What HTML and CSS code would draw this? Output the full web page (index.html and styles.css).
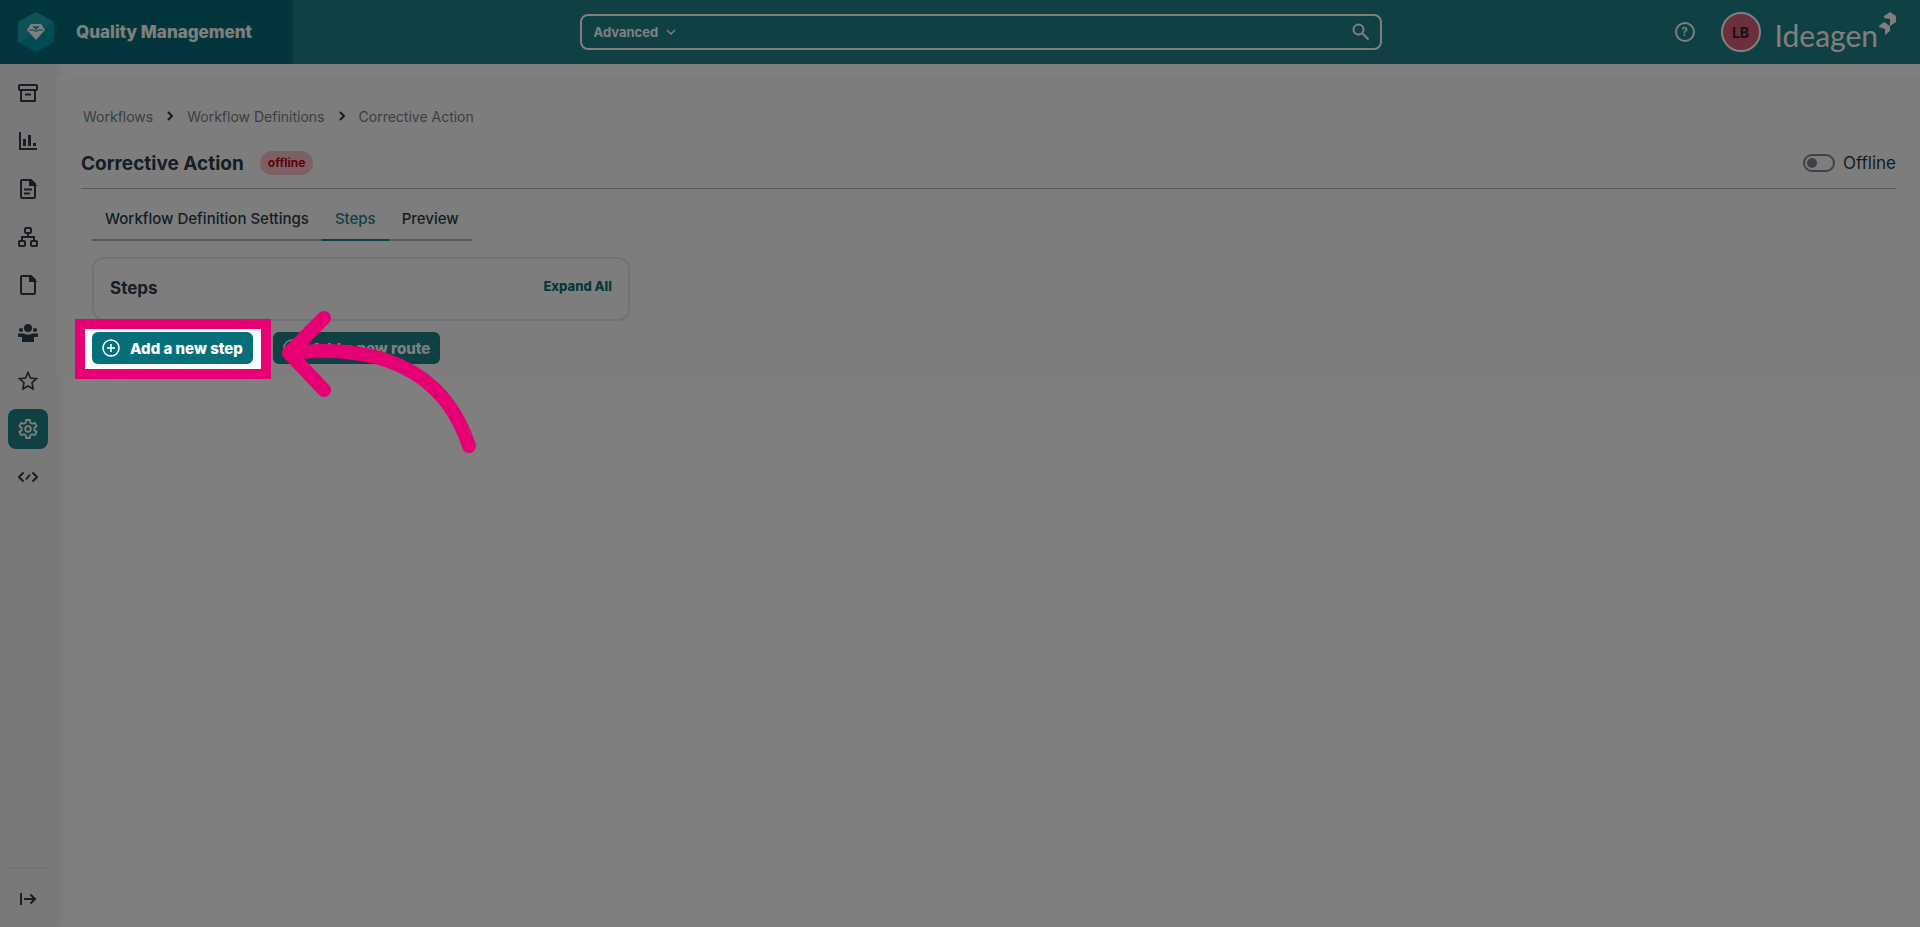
FILE: index.html
```html
<!DOCTYPE html>
<html lang="en">
<head>
    <meta charset="UTF-8">
    <title>Quality Management</title>
    <link rel="stylesheet" href="styles.css">
</head>
<body>
    <header class="topbar">
        <a class="brand" href="#">
            <svg class="brand-icon" viewBox="0 0 36 40">
                <path d="M18 0 36 10v20L18 40 0 30V10z" fill="#0096a8"/>
                <path d="M18 0 36 10 0 31V10z" fill="#3bb0bd" opacity=".5"/>
                <path d="M13 12h10l4 6-9 10-9-10z" fill="#fff"/>
                <path d="M11 18h4l2 1h2l2-1h4M15 14l3 3 3-3M18 14v3" fill="none" stroke="#0096a8" stroke-width="1.2"/>
            </svg>
            <span>Quality Management</span>
        </a>
        <form class="search">
            <select class="search-mode" aria-label="Search mode">
                <option>Advanced</option>
            </select>
            <svg class="chevron" viewBox="0 0 10 6"><path d="M1 1l4 4 4-4"/></svg>
            <input class="search-input" type="text" aria-label="Search">
            <button class="search-button" type="submit" aria-label="Search">
                <svg viewBox="0 0 18 18"><circle cx="6.5" cy="6.5" r="5"/><path d="M10.5 10.5l6 6"/></svg>
            </button>
        </form>
        <div class="actions">
            <button class="help" type="button" aria-label="Help">?</button>
            <button class="avatar" type="button">LB</button>
            <a class="company" href="#">
                <span>Ideagen</span>
                <svg viewBox="0 0 18 24">
                    <path d="M12 0l6 4v6l-6 4V7L6 6V4z"/>
                    <path d="M6 10l6 4v5l-5 4v-6l-6-2v-1z"/>
                </svg>
            </a>
        </div>
    </header>

    <div class="page">
        <nav class="sidebar">
            <a class="nav-item" href="#" aria-label="Archive">
                <svg viewBox="0 0 20 20"><rect x="1" y="2" width="18" height="5" rx="1"/><path d="M3 7v10.500q0 .5.500.500h13q.5 0 .5-.5V7M7 11.500h6"/></svg>
            </a>
            <a class="nav-item" href="#" aria-label="Reports">
                <svg viewBox="0 0 20 20"><path d="M2 1v17h17"/><path d="M6.500 8v7M11.500 4v11M16.500 12v3" stroke-width="3"/></svg>
            </a>
            <a class="nav-item" href="#" aria-label="Documents">
                <svg viewBox="0 0 20 20"><path d="M4 1h9l4 4v13q0 1-1 1H4q-1 0-1-1V2q0-1 1-1zM6 10.500h8M6 14.500h6"/><path d="M12 1v5h5z" fill="currentColor"/></svg>
            </a>
            <a class="nav-item" href="#" aria-label="Structure">
                <svg viewBox="0 0 20 20"><rect x="7" y="1" width="6" height="5" rx="1"/><rect x="1" y="14" width="6" height="5" rx="1"/><rect x="13" y="14" width="6" height="5" rx="1"/><path d="M10 6v4M4 14v-4h12v4"/></svg>
            </a>
            <a class="nav-item" href="#" aria-label="Files">
                <svg viewBox="0 0 20 20"><path d="M4 1h9l4 4v13q0 1-1 1H4q-1 0-1-1V2q0-1 1-1z"/><path d="M12 1v5h5z" fill="currentColor"/></svg>
            </a>
            <a class="nav-item" href="#" aria-label="People">
                <svg viewBox="0 0 20 20"><g fill="currentColor" stroke="none"><circle cx="10" cy="5" r="4"/><circle cx="3" cy="7" r="2"/><circle cx="17" cy="7" r="2"/><path d="M0 10.500h6l1.500 1h5l1.500-1h6V14h-4v5H4v-5H0z"/></g></svg>
            </a>
            <a class="nav-item" href="#" aria-label="Favourites">
                <svg viewBox="0 0 20 20"><path d="M10 1.500l2.500 5.500 6 .7-4.500 4 1.200 6.300L10 15l-5.200 3L6 11.700l-4.500-4 6-.7z" stroke-width="1.600"/></svg>
            </a>
            <a class="nav-item active" href="#" aria-label="Settings">
                <svg viewBox="0 0 20 20"><path d="M8.200 1h3.600l.5 2.700 1.900 1.100 2.600-1 1.800 3.200-2.100 1.700v2.600l2.100 1.700-1.800 3.200-2.600-1-1.900 1.100-.5 2.700H8.200l-.5-2.700-1.900-1.100-2.600 1L1.400 13l2.100-1.700V8.700L1.400 7l1.800-3.200 2.600 1 1.900-1.100z" stroke-width="1.800"/><circle cx="10" cy="10" r="2.800" stroke-width="1.800"/></svg>
            </a>
            <a class="nav-item" href="#" aria-label="Developer">
                <svg viewBox="0 0 20 20"><path d="M5.500 5.500L1 10l4.500 4.500M14.500 5.500L19 10l-4.500 4.500M8 12.500l4-5"/></svg>
            </a>
            <div class="sidebar-bottom">
                <button class="nav-item" type="button" aria-label="Expand menu">
                    <svg viewBox="0 0 20 20"><path d="M3 4v12M6 10h11M12.500 5.500L17 10l-4.500 4.500"/></svg>
                </button>
            </div>
        </nav>

        <main class="content">
            <div class="panel">
                <nav class="breadcrumbs">
                    <a href="#">Workflows</a>
                    <svg viewBox="0 0 6 10"><path d="M1 1l4 4-4 4"/></svg>
                    <a href="#">Workflow Definitions</a>
                    <svg viewBox="0 0 6 10"><path d="M1 1l4 4-4 4"/></svg>
                    <a href="#">Corrective Action</a>
                </nav>

                <div class="title-row">
                    <h1>Corrective Action</h1>
                    <span class="badge">offline</span>
                    <label class="toggle" for="online">
                        <input type="checkbox" id="online">
                        Offline
                    </label>
                </div>

                <div class="workflow">
                    <nav class="tabs">
                        <a class="tab" href="#">Workflow Definition Settings</a>
                        <a class="tab selected" href="#">Steps</a>
                        <a class="tab" href="#">Preview</a>
                    </nav>

                    <section class="card">
                        <h2>Steps</h2>
                        <button class="link-button" type="button">Expand All</button>
                    </section>

                    <div class="buttons">
                        <div class="spotlight">
                            <button class="btn btn-step" type="button">
                                <svg viewBox="0 0 18 18"><circle cx="9" cy="9" r="8"/><path d="M9 5v8M5 9h8"/></svg>
                                Add a new step
                            </button>
                            <svg class="arrow" viewBox="0 0 210 150">
                                <path d="M47 10L12 45l35 37M12 45C96 36 166 58 192 138"/>
                            </svg>
                        </div>
                        <button class="btn" type="button">
                            <svg viewBox="0 0 18 18"><circle cx="9" cy="9" r="8"/><path d="M9 5v8M5 9h8"/></svg>
                            Add a new route
                        </button>
                    </div>
                </div>
            </div>
        </main>
    </div>
</body>
</html>
```
FILE: styles.css
```css
* {
    box-sizing: border-box;
}

body {
    margin: 0;
    min-height: 100vh;
    display: flex;
    flex-direction: column;
    font-family: Inter, "Liberation Sans", sans-serif;
    font-size: 14px;
    color: #2b3a4a;
    background-color: #fff;
}

a {
    color: inherit;
    text-decoration: none;
}

button, input, select {
    font-family: inherit;
    color: inherit;
    border: none;
    background: none;
    padding: 0;
}

button {
    cursor: pointer;
}

svg {
    flex: none;
    fill: none;
    stroke: currentColor;
    stroke-width: 2;
}

/* Top bar */
.topbar {
    display: flex;
    align-items: center;
    justify-content: space-between;
    height: 64px;
    background-color: #1e8088;
    color: #fff;
}

.brand {
    display: flex;
    align-items: center;
    gap: 22px;
    width: 293px;
    height: 100%;
    padding-left: 18px;
    background-color: #066c78;
    font-size: 17px;
    font-weight: 800;
}

.brand-icon {
    width: 36px;
    height: 40px;
    stroke: none;
}

.search {
    display: flex;
    align-items: center;
    width: calc(42% - 4px);
    height: 36px;
    padding: 0 10px 0 12px;
    border: 2px solid #fff;
    border-radius: 8px;
}

.search-mode {
    appearance: none;
    font-size: 13px;
    font-weight: 700;
    outline: none;
}

.chevron {
    width: 10px;
    height: 6px;
    margin-left: 7px;
    stroke-width: 1.5;
}

.search-input {
    flex: 1;
    height: 100%;
    padding: 0 12px;
    outline: none;
}

.search-button svg {
    display: block;
    width: 18px;
    height: 18px;
}

.actions {
    display: flex;
    align-items: center;
    padding: 0 24px 0 6px;
}

.help {
    width: 20px;
    height: 20px;
    margin-right: 26px;
    border: 2px solid #fff;
    border-radius: 50%;
    font-size: 12px;
    font-weight: 600;
    line-height: 16px;
}

.avatar {
    width: 40px;
    height: 40px;
    margin-right: 14px;
    border: 2px solid #fff;
    border-radius: 50%;
    background-color: #d95f78;
    color: #2a2138;
    font-size: 14px;
    font-weight: 700;
}

.company {
    display: flex;
    align-items: flex-start;
    padding-top: 5px;
    font-family: Lato, sans-serif;
    font-size: 30px;
    line-height: 46px;
}

.company svg {
    width: 18px;
    height: 24px;
    fill: #fff;
    stroke: none;
}

/* Side menu */
.page {
    flex: 1;
    display: flex;
}

.sidebar {
    display: flex;
    flex-direction: column;
    align-items: center;
    gap: 8px;
    width: 56px;
    padding: 9px 8px 8px;
    background-color: #f3f3f3;
    box-shadow: 2px 0 12px rgba(0, 0, 0, 0.1);
}

.nav-item {
    display: flex;
    align-items: center;
    justify-content: center;
    width: 40px;
    height: 40px;
    border-radius: 8px;
}

.nav-item svg {
    width: 20px;
    height: 20px;
}

.nav-item.active {
    background-color: #1e8088;
    color: #fff;
}

.sidebar-bottom {
    margin-top: auto;
    padding-top: 10px;
    border-top: 2px solid #e6e6e6;
}

/* Content */
.content {
    flex: 1;
    padding-top: 13px;
}

.panel {
    padding: 27px 24px 12px 25px;
    background-color: #fbfbfb;
}

.breadcrumbs {
    display: flex;
    align-items: center;
    gap: 14px;
    height: 24px;
    padding-left: 2px;
    color: #777d81;
    font-size: 14px;
}

.breadcrumbs svg {
    width: 6px;
    height: 10px;
    color: #2b3a4a;
}

.title-row {
    display: flex;
    align-items: center;
    height: 61px;
    padding-top: 10px;
    border-bottom: 1px solid #b9b9bd;
}

h1, h2 {
    margin: 0;
    font-size: 19px;
    font-weight: 700;
}

h2 {
    font-size: 17px;
}

.badge {
    margin-left: 16px;
    padding: 0 8px;
    border-radius: 12px;
    background-color: #fbc0c6;
    color: #c1001a;
    font-size: 12px;
    font-weight: 700;
    line-height: 24px;
}

.toggle {
    display: flex;
    align-items: center;
    gap: 8px;
    margin-left: auto;
    font-size: 17px;
}

.toggle input {
    appearance: none;
    display: flex;
    align-items: center;
    width: 32px;
    height: 18px;
    margin: 0;
    padding: 0 2px;
    border: 2px solid #7d848c;
    border-radius: 9px;
}

.toggle input::before {
    content: "";
    width: 10px;
    height: 10px;
    border-radius: 50%;
    background-color: #7d848c;
}

.workflow {
    padding: 12px 11px 0;
}

.tabs {
    display: inline-flex;
    border-bottom: 2px solid #aeb0ba;
}

.tab {
    height: 40px;
    margin-bottom: -2px;
    padding: 0 13px;
    font-size: 15px;
    font-weight: 500;
    line-height: 36px;
    border-bottom: 2px solid transparent;
}

.tab.selected {
    color: #1e8088;
    border-color: #1e8088;
}

.card {
    display: flex;
    align-items: center;
    justify-content: space-between;
    width: 30%;
    height: 64px;
    margin-top: 16px;
    padding: 0 16px 2px;
    border: 2px solid #e3e4e6;
    border-radius: 12px;
}

.link-button {
    padding-bottom: 4px;
    color: #06707a;
    font-size: 13px;
    font-weight: 800;
}

.buttons {
    display: flex;
    gap: 20px;
    margin-top: 11px;
}

.btn {
    display: flex;
    align-items: center;
    gap: 10px;
    height: 32px;
    padding: 0 10px;
    border-radius: 6px;
    background-color: #1e8088;
    color: #fff;
    font-size: 15px;
    font-weight: 800;
}

.btn-step {
    background-color: #06707a;
}

.btn svg {
    width: 18px;
    height: 18px;
    stroke-width: 1.5;
}

/* Dims the page around the highlighted button */
.spotlight {
    position: relative;
    z-index: 10;
}

.spotlight::after {
    content: "";
    position: absolute;
    inset: -13px -18px -15px -17px;
    border: 10px solid #e60073;
    box-shadow: 0 0 0 9999px rgba(0, 0, 0, 0.5);
    pointer-events: none;
}

.arrow {
    position: absolute;
    z-index: 1;
    top: -24px;
    left: calc(100% + 24px);
    width: 210px;
    height: 150px;
    color: #e60073;
    stroke-width: 14;
    stroke-linecap: round;
    stroke-linejoin: round;
    pointer-events: none;
}
```
